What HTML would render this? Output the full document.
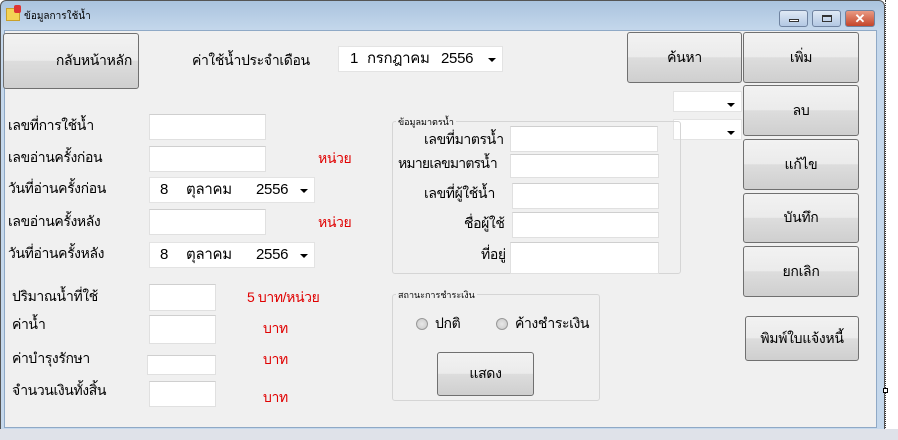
<!DOCTYPE html>
<html><head><meta charset="utf-8"><style>
*{box-sizing:border-box;margin:0;padding:0}
body{width:898px;height:440px;background:#fff;position:relative;overflow:hidden;font-family:"Tahoma","Liberation Sans","Noto Sans CJK SC",sans-serif;font-size:14px;color:#000}
.a{position:absolute}
.win{left:0;top:0;width:885px;height:430px;background:linear-gradient(#aac3de,#c5d8ec 30px);border:1px solid #555;border-radius:6px 6px 0 0}
.client{left:4px;top:30px;width:873px;height:398px;background:#f0f0f0;border:1px solid #8fa9c6}
.strip{left:0;top:429px;width:898px;height:11px;background:#dfe2e9}
.dot{left:885px;top:0;width:1px;height:430px;border-left:1px dotted #333}
.btn{position:absolute;border:1px solid #707070;border-radius:3px;background:linear-gradient(#f2f2f2 0%,#ebebeb 49%,#dddddd 50%,#cfcfcf 100%);display:flex;align-items:center;justify-content:center;font-size:14px;letter-spacing:-0.3px;color:#000}
.tb{position:absolute;background:#fff;border:1px solid #e0e0e0;border-top-color:#cfcfcf}
.lbl{position:absolute;font-size:14px;letter-spacing:-0.4px;white-space:nowrap}
.red{color:#e00000}
.cb{position:absolute;background:#fff;border:1px solid #e3e3e3;font-size:15px;white-space:pre;line-height:24px;letter-spacing:-0.3px}
.cb span{position:absolute;top:0}
.cb:after{content:"";position:absolute;right:6px;top:11px;border-left:4px solid transparent;border-right:4px solid transparent;border-top:4px solid #000}
.grp{position:absolute;border:1px solid #d5d5d5;border-radius:3px}
.gt{position:absolute;font-size:9px;background:#f0f0f0;padding:0 2px;top:-7px;left:3px}
.rad{position:absolute;width:12px;height:12px;border-radius:50%;border:1px solid #999;background:radial-gradient(#e8e8e8,#c8c8c8)}
.cap{position:absolute;height:17px;top:10px;border:1px solid #6f83a0;border-radius:3px}
</style></head><body>
<div class="a win"></div>
<div class="a" style="left:6px;top:8px;width:14px;height:13px;background:#f3d254;border:1px solid #c9a02a"></div>
<div class="a" style="left:14px;top:5px;width:7px;height:8px;background:#d33;border-radius:2px"></div>
<div class="a" style="left:24px;top:9px;font-size:10px">ข้อมูลการใช้น้ำ</div>
<div class="cap" style="left:779px;width:29px;background:linear-gradient(#dfe9f5,#b3c8e3)"><div class="a" style="left:9px;top:8px;width:10px;height:3px;border:1px solid #333;background:#fff"></div></div>
<div class="cap" style="left:812px;width:29px;background:linear-gradient(#dfe9f5,#b3c8e3)"><div class="a" style="left:9px;top:4px;width:10px;height:7px;border:1px solid #333;border-top-width:2px"></div></div>
<div class="cap" style="left:845px;width:30px;background:linear-gradient(#e99a83,#c4452a);color:#fff;font-weight:bold;font-size:13px;text-align:center;line-height:15px">✕</div>
<div class="a client"></div>
<div class="a dot"></div>
<div class="a strip"></div>

<div class="btn" style="left:3px;top:33px;width:136px;height:56px;justify-content:flex-end;padding-right:6px">กลับหน้าหลัก</div>
<div class="lbl" style="left:192px;top:50px">ค่าใช้น้ำประจำเดือน</div>
<div class="cb" style="left:338px;top:46px;width:165px;height:26px"><span style="left:11px">1</span><span style="left:28px">กรกฎาคม</span><span style="left:102px">2556</span></div>
<div class="btn" style="left:627px;top:32px;width:115px;height:51px">ค้นหา</div>
<div class="btn" style="left:743px;top:32px;width:116px;height:51px">เพิ่ม</div>
<div class="cb" style="left:673px;top:91px;width:69px;height:21px"></div>
<div class="cb" style="left:673px;top:119px;width:69px;height:21px"></div>
<div class="btn" style="left:743px;top:85px;width:116px;height:51px">ลบ</div>
<div class="btn" style="left:743px;top:139px;width:116px;height:51px">แก้ไข</div>
<div class="btn" style="left:743px;top:193px;width:116px;height:50px">บันทึก</div>
<div class="btn" style="left:743px;top:246px;width:116px;height:51px">ยกเลิก</div>
<div class="btn" style="left:745px;top:316px;width:114px;height:45px">พิมพ์ใบแจ้งหนี้</div>

<div class="lbl" style="left:8px;top:115px">เลขที่การใช้น้ำ</div>
<div class="tb" style="left:149px;top:114px;width:117px;height:26px"></div>
<div class="lbl" style="left:8px;top:147px">เลขอ่านครั้งก่อน</div>
<div class="tb" style="left:149px;top:146px;width:117px;height:26px"></div>
<div class="lbl red" style="left:318px;top:148px">หน่วย</div>
<div class="lbl" style="left:8px;top:178px">วันที่อ่านครั้งก่อน</div>
<div class="cb" style="left:149px;top:177px;width:166px;height:26px"><span style="left:10px">8</span><span style="left:36px">ตุลาคม</span><span style="left:106px">2556</span></div>
<div class="lbl" style="left:8px;top:211px">เลขอ่านครั้งหลัง</div>
<div class="tb" style="left:149px;top:209px;width:117px;height:26px"></div>
<div class="lbl red" style="left:318px;top:212px">หน่วย</div>
<div class="lbl" style="left:8px;top:243px">วันที่อ่านครั้งหลัง</div>
<div class="cb" style="left:149px;top:242px;width:166px;height:26px"><span style="left:10px">8</span><span style="left:36px">ตุลาคม</span><span style="left:106px">2556</span></div>

<div class="lbl" style="left:12px;top:286px">ปริมาณน้ำที่ใช้</div>
<div class="tb" style="left:149px;top:284px;width:67px;height:27px"></div>
<div class="lbl red" style="left:247px;top:287px">5 บาท/หน่วย</div>
<div class="lbl" style="left:12px;top:314px">ค่าน้ำ</div>
<div class="tb" style="left:149px;top:315px;width:67px;height:29px"></div>
<div class="lbl red" style="left:263px;top:318px">บาท</div>
<div class="lbl" style="left:12px;top:348px">ค่าบำรุงรักษา</div>
<div class="tb" style="left:147px;top:355px;width:69px;height:20px"></div>
<div class="lbl red" style="left:263px;top:349px">บาท</div>
<div class="lbl" style="left:12px;top:380px">จำนวนเงินทั้งสิ้น</div>
<div class="tb" style="left:149px;top:381px;width:67px;height:26px"></div>
<div class="lbl red" style="left:263px;top:387px">บาท</div>

<div class="grp" style="left:392px;top:121px;width:289px;height:153px"><div class="gt">ข้อมูลมาตรน้ำ</div></div>
<div class="lbl" style="left:424px;top:129px">เลขที่มาตรน้ำ</div>
<div class="lbl" style="left:398px;top:153px;letter-spacing:-0.8px">หมายเลขมาตรน้ำ</div>
<div class="tb" style="left:510px;top:126px;width:148px;height:26px"></div>
<div class="tb" style="left:510px;top:154px;width:149px;height:24px"></div>
<div class="lbl" style="left:424px;top:183px">เลขที่ผู้ใช้น้ำ</div>
<div class="tb" style="left:512px;top:183px;width:147px;height:26px"></div>
<div class="lbl" style="left:464px;top:213px">ชื่อผู้ใช้</div>
<div class="tb" style="left:512px;top:212px;width:147px;height:26px"></div>
<div class="lbl" style="left:481px;top:244px">ที่อยู่</div>
<div class="tb" style="left:510px;top:242px;width:149px;height:32px"></div>

<div class="grp" style="left:392px;top:294px;width:208px;height:107px"><div class="gt">สถานะการชำระเงิน</div></div>
<div class="rad" style="left:416px;top:318px"></div>
<div class="lbl" style="left:435px;top:313px">ปกติ</div>
<div class="rad" style="left:496px;top:318px"></div>
<div class="lbl" style="left:515px;top:313px">ค้างชำระเงิน</div>
<div class="btn" style="left:437px;top:352px;width:97px;height:44px">แสดง</div>
<div class="a" style="left:883px;top:388px;width:5px;height:5px;border:1px solid #000;background:#fff"></div>
</body></html>
